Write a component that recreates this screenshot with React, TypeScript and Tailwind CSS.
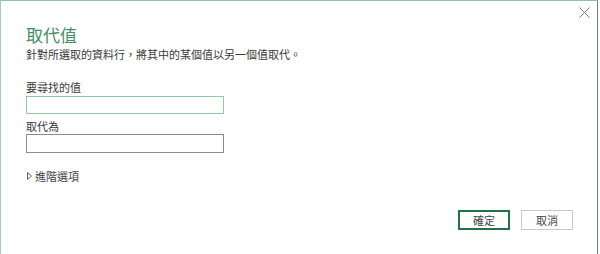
import React from "react";

export default function App() {
  const font = { fontFamily: '"Noto Sans CJK TC", "Noto Sans", "Liberation Sans", sans-serif' };
  return (
    <div className="w-[600px] h-[254px] bg-white relative overflow-hidden" style={font}>
      <div className="w-[598px] h-[254px] border-t border-l border-r border-t-[#8fc0a0] border-l-[#a9cdb6] border-r-[#5f8f74] flex flex-col pl-[25px] pr-[24px]">
        <div className="mt-[23px] h-[22px] leading-[22px] text-[17px] text-[#448f64]">取代值</div>
        <div className="h-4 leading-4 text-[11px] text-[#3a3a3a]">
          針對所選取的資料行，將其中的某個值以另一個值取代。
        </div>
        <div className="mt-[17px] h-4 leading-4 text-[11px] text-[#3a3a3a]">要尋找的值</div>
        <input className="mt-[1px] w-[198px] h-[18px] border border-[#8ccca6] outline-none" />
        <div className="mt-[4px] h-4 leading-4 text-[11px] text-[#3a3a3a]">取代為</div>
        <input className="w-[198px] h-[19px] border border-[#8c8c8c] outline-none" />
        <div className="mt-[15px] h-4 flex items-center gap-[3px] text-[11px] text-[#444444]">
          <svg width="5" height="8" viewBox="0 0 5 8" className="ml-[1px]">
            <path d="M0.5 0.5 L4.5 4 L0.5 7.5 Z" fill="none" stroke="#666" strokeWidth="1" />
          </svg>
          <span className="leading-4">進階選項</span>
        </div>
        <div className="mt-[26px] flex justify-end gap-[11px]">
          <button className="w-[52px] h-[20px] border border-[#217346] shadow-[inset_0_0_0_1px_#217346] text-[11px] leading-[18px] text-[#444444] bg-white">
            確定
          </button>
          <button className="w-[52px] h-[20px] border border-[#c8c8c8] text-[11px] leading-[18px] text-[#444444] bg-white">
            取消
          </button>
        </div>
      </div>
      <svg className="absolute left-[579px] top-[7px]" width="11" height="11" viewBox="0 0 11 11">
        <path d="M0.5 0.5 L10.5 10.5 M10.5 0.5 L0.5 10.5" stroke="#7a7a7a" strokeWidth="1" />
      </svg>
    </div>
  );
}
